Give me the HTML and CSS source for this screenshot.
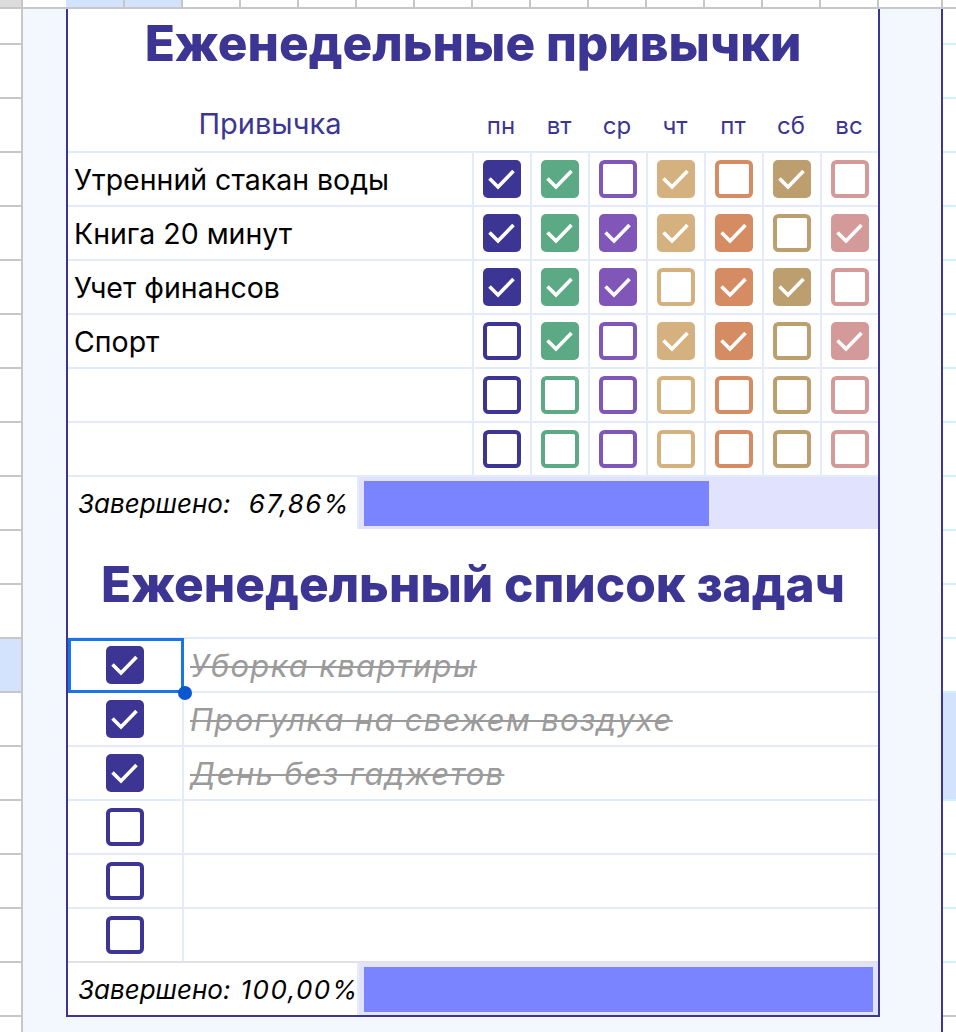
FILE: index.html
```html
<!DOCTYPE html>
<html lang="ru">
<head>
    <meta charset="UTF-8">
    <title>Еженедельные привычки</title>
    <link rel="stylesheet" href="styles.css">
</head>
<body>
    <svg class="sprite" xmlns="http://www.w3.org/2000/svg">
        <symbol id="on" viewBox="0 0 38 38">
            <rect width="38" height="38" rx="5" fill="currentColor"/>
            <path d="M6.5 18.5l8.5 8.5L30.5 11" fill="none" stroke="#fff" stroke-width="3.6"/>
        </symbol>
        <symbol id="off" viewBox="0 0 38 38">
            <rect x="2" y="2" width="34" height="34" rx="3.5" fill="#fff" stroke="currentColor" stroke-width="4"/>
        </symbol>
    </svg>

    <div class="col-heads">
        <div class="corner"></div>
        <div class="col-gutter"></div>
        <div class="col-head first selected"></div>
        <div class="col-head selected"></div>
        <div class="col-head"></div>
        <div class="col-head"></div>
        <div class="col-head"></div>
        <div class="col-head"></div>
        <div class="col-head"></div>
        <div class="col-head"></div>
        <div class="col-head"></div>
        <div class="col-head"></div>
        <div class="col-head"></div>
        <div class="col-head"></div>
        <div class="col-head"></div>
        <div class="col-head"></div>
        <div class="col-head wide"></div>
        <div class="col-head"></div>
    </div>

    <div class="sheet-body">
        <div class="row-heads">
            <div class="row-head top"></div>
            <div class="row-head"></div><div class="row-head"></div><div class="row-head"></div>
            <div class="row-head"></div><div class="row-head"></div><div class="row-head"></div>
            <div class="row-head"></div><div class="row-head"></div><div class="row-head"></div>
            <div class="row-head"></div><div class="row-head"></div>
            <div class="row-head selected"></div>
            <div class="row-head"></div><div class="row-head"></div><div class="row-head"></div>
            <div class="row-head"></div><div class="row-head"></div><div class="row-head"></div>
        </div>

        <div class="gutter"></div>

        <div class="card">
            <div class="title-block">
                <h1 class="title">Еженедельные привычки</h1>
            </div>

            <div class="habit-grid head">
                <div class="habit-label">Привычка</div>
                <div class="day">пн</div>
                <div class="day">вт</div>
                <div class="day">ср</div>
                <div class="day">чт</div>
                <div class="day">пт</div>
                <div class="day">сб</div>
                <div class="day">вс</div>
            </div>

            <div class="habit-grid row">
                <div class="habit-name">Утренний стакан воды</div>
                <div class="cell"><svg class="box d1"><use href="#on"/></svg></div>
                <div class="cell"><svg class="box d2"><use href="#on"/></svg></div>
                <div class="cell"><svg class="box d3"><use href="#off"/></svg></div>
                <div class="cell"><svg class="box d4"><use href="#on"/></svg></div>
                <div class="cell"><svg class="box d5"><use href="#off"/></svg></div>
                <div class="cell"><svg class="box d6"><use href="#on"/></svg></div>
                <div class="cell"><svg class="box d7"><use href="#off"/></svg></div>
            </div>
            <div class="habit-grid row">
                <div class="habit-name">Книга 20 минут</div>
                <div class="cell"><svg class="box d1"><use href="#on"/></svg></div>
                <div class="cell"><svg class="box d2"><use href="#on"/></svg></div>
                <div class="cell"><svg class="box d3"><use href="#on"/></svg></div>
                <div class="cell"><svg class="box d4"><use href="#on"/></svg></div>
                <div class="cell"><svg class="box d5"><use href="#on"/></svg></div>
                <div class="cell"><svg class="box d6"><use href="#off"/></svg></div>
                <div class="cell"><svg class="box d7"><use href="#on"/></svg></div>
            </div>
            <div class="habit-grid row">
                <div class="habit-name">Учет финансов</div>
                <div class="cell"><svg class="box d1"><use href="#on"/></svg></div>
                <div class="cell"><svg class="box d2"><use href="#on"/></svg></div>
                <div class="cell"><svg class="box d3"><use href="#on"/></svg></div>
                <div class="cell"><svg class="box d4"><use href="#off"/></svg></div>
                <div class="cell"><svg class="box d5"><use href="#on"/></svg></div>
                <div class="cell"><svg class="box d6"><use href="#on"/></svg></div>
                <div class="cell"><svg class="box d7"><use href="#off"/></svg></div>
            </div>
            <div class="habit-grid row">
                <div class="habit-name">Спорт</div>
                <div class="cell"><svg class="box d1"><use href="#off"/></svg></div>
                <div class="cell"><svg class="box d2"><use href="#on"/></svg></div>
                <div class="cell"><svg class="box d3"><use href="#off"/></svg></div>
                <div class="cell"><svg class="box d4"><use href="#on"/></svg></div>
                <div class="cell"><svg class="box d5"><use href="#on"/></svg></div>
                <div class="cell"><svg class="box d6"><use href="#off"/></svg></div>
                <div class="cell"><svg class="box d7"><use href="#on"/></svg></div>
            </div>
            <div class="habit-grid row">
                <div class="habit-name"></div>
                <div class="cell"><svg class="box d1"><use href="#off"/></svg></div>
                <div class="cell"><svg class="box d2"><use href="#off"/></svg></div>
                <div class="cell"><svg class="box d3"><use href="#off"/></svg></div>
                <div class="cell"><svg class="box d4"><use href="#off"/></svg></div>
                <div class="cell"><svg class="box d5"><use href="#off"/></svg></div>
                <div class="cell"><svg class="box d6"><use href="#off"/></svg></div>
                <div class="cell"><svg class="box d7"><use href="#off"/></svg></div>
            </div>
            <div class="habit-grid row">
                <div class="habit-name"></div>
                <div class="cell"><svg class="box d1"><use href="#off"/></svg></div>
                <div class="cell"><svg class="box d2"><use href="#off"/></svg></div>
                <div class="cell"><svg class="box d3"><use href="#off"/></svg></div>
                <div class="cell"><svg class="box d4"><use href="#off"/></svg></div>
                <div class="cell"><svg class="box d5"><use href="#off"/></svg></div>
                <div class="cell"><svg class="box d6"><use href="#off"/></svg></div>
                <div class="cell"><svg class="box d7"><use href="#off"/></svg></div>
            </div>

            <div class="done-row">
                <div class="done-label"><span>Завершено:</span><span class="pct">67,86%</span></div>
                <div class="done-track"><div class="done-bar" style="width: 67.86%"></div></div>
            </div>

            <div class="title-block second">
                <h1 class="title">Еженедельный список задач</h1>
            </div>

            <div class="task-row">
                <div class="task-check">
                    <svg class="box d1"><use href="#on"/></svg>
                    <div class="selection"><span class="handle"></span></div>
                </div>
                <div class="task-text done">Уборка квартиры</div>
            </div>
            <div class="task-row">
                <div class="task-check"><svg class="box d1"><use href="#on"/></svg></div>
                <div class="task-text done">Прогулка на свежем воздухе</div>
            </div>
            <div class="task-row">
                <div class="task-check"><svg class="box d1"><use href="#on"/></svg></div>
                <div class="task-text done">День без гаджетов</div>
            </div>
            <div class="task-row">
                <div class="task-check"><svg class="box d1"><use href="#off"/></svg></div>
                <div class="task-text"></div>
            </div>
            <div class="task-row">
                <div class="task-check"><svg class="box d1"><use href="#off"/></svg></div>
                <div class="task-text"></div>
            </div>
            <div class="task-row">
                <div class="task-check"><svg class="box d1"><use href="#off"/></svg></div>
                <div class="task-text"></div>
            </div>

            <div class="done-row last">
                <div class="done-label"><span>Завершено:</span><span class="pct">100,00%</span></div>
                <div class="done-track"><div class="done-bar" style="width: 100%"></div></div>
            </div>
        </div>

        <div class="gutter right"></div>

        <div class="next-card">
            <div class="next-cell top"></div>
            <div class="next-cell"></div><div class="next-cell"></div><div class="next-cell"></div>
            <div class="next-cell"></div><div class="next-cell"></div><div class="next-cell"></div>
            <div class="next-cell"></div><div class="next-cell"></div><div class="next-cell"></div>
            <div class="next-cell"></div><div class="next-cell"></div><div class="next-cell"></div>
            <div class="next-cell tall selected"></div>
            <div class="next-cell"></div><div class="next-cell"></div><div class="next-cell"></div>
            <div class="next-cell end"></div>
        </div>
    </div>
</body>
</html>
```

FILE: styles.css
```css
body {
    margin: 0;
    width: 956px;
    height: 1032px;
    overflow: hidden;
    background-color: #ffffff;
    font-family: Inter, "Noto Sans", sans-serif;
}
.sprite {
    position: absolute;
    width: 0;
    height: 0;
}

/* spreadsheet chrome */
.col-heads {
    display: flex;
    height: 7px;
    border-bottom: 2px solid #c7c7c7;
}
.corner {
    width: 21px;
    flex: none;
    background-color: #dcdcdc;
    border-right: 2px solid #c7c7c7;
}
.col-gutter {
    width: 43px;
    flex: none;
}
.col-head {
    width: 56px;
    flex: none;
    border-right: 2px solid #c7c7c7;
}
.col-head.first {
    width: 57px;
}
.col-head.wide {
    width: 62px;
}
.col-head.selected {
    background-color: #d3e3fd;
}
.sheet-body {
    display: flex;
    align-items: flex-start;
    height: 1023px;
    background-color: #f3f7fe;
}
.row-heads {
    width: 21px;
    flex: none;
    height: 100%;
    background-color: #ffffff;
    border-right: 2px solid #c7c7c7;
}
.row-head {
    height: 52px;
    border-bottom: 2px solid #c7c7c7;
}
.row-head.top {
    height: 34px;
}
.row-head.selected {
    background-color: #d3e3fd;
}
.gutter {
    width: 43px;
    flex: none;
}
.gutter.right {
    width: 61px;
}
.next-card {
    flex: 1;
    height: 100%;
    border-left: 2px solid #3c3594;
    background-color: #ffffff;
}
.next-cell {
    height: 52px;
    border-bottom: 2px solid #cff3fb;
}
.next-cell.top {
    height: 34px;
}
.next-cell.tall {
    height: 106px;
}
.next-cell.selected {
    background-color: #d3e3fd;
}
.next-cell.end {
    border-bottom-color: #c7c7c7;
}

/* card */
.card {
    width: 810px;
    flex: none;
    background-color: #ffffff;
    border: 2px solid #3c3594;
    border-top: none;
}
.title-block {
    height: 78px;
    padding-top: 10px;
    text-align: center;
}
.title-block.second {
    height: 77px;
    padding-top: 31px;
}
.title {
    margin: 0;
    font-size: 49.5px;
    font-weight: 800;
    line-height: 1;
    color: #3c3594;
}

.habit-grid {
    display: grid;
    grid-template-columns: 404px repeat(7, 58px);
}
.habit-grid.head {
    height: 41px;
    padding-bottom: 13px;
    align-items: end;
    color: #3c3594;
    line-height: 1;
}
.habit-label {
    text-align: center;
    font-size: 29px;
}
.day {
    text-align: center;
    font-size: 24px;
}
.habit-grid.row {
    height: 52px;
    border-top: 2px solid #e4ecfb;
}
.habit-name {
    display: flex;
    align-items: center;
    padding-left: 6px;
    font-size: 28.5px;
    color: #000000;
}
.cell {
    display: flex;
    align-items: center;
    justify-content: center;
    border-left: 2px solid #e4ecfb;
}
.box {
    width: 38px;
    height: 38px;
}
.d1 { color: #3c3594; }
.d2 { color: #5ca985; }
.d3 { color: #8156b9; }
.d4 { color: #d4b17e; }
.d5 { color: #d58c62; }
.d6 { color: #bd9f6f; }
.d7 { color: #d39a99; }

.done-row {
    display: flex;
    height: 52px;
    border-top: 2px solid #e4ecfb;
}
.done-row.last {
    border-top-color: #e0e0e6;
}
.done-label {
    width: 272px;
    flex: none;
    display: flex;
    align-items: center;
    justify-content: space-between;
    gap: 10px;
    padding: 0 7px 0 10px;
    font-size: 26px;
    font-style: italic;
    white-space: nowrap;
}
.pct {
    letter-spacing: 1.5px;
}
.done-track {
    flex: 1;
    padding: 4px 5px 3px 5px;
    background-color: #e1e2fe;
    border-left: 2px solid #e4ecfb;
}
.done-bar {
    height: 100%;
    background-color: #7b84ff;
}

.task-row {
    display: flex;
    height: 52px;
    border-top: 2px solid #e4ecfb;
}
.task-check {
    position: relative;
    width: 114px;
    flex: none;
    display: flex;
    align-items: center;
    justify-content: center;
}
.task-text {
    flex: 1;
    display: flex;
    align-items: center;
    padding-left: 6px;
    border-left: 2px solid #e4ecfb;
    font-size: 31px;
    letter-spacing: 1.3px;
    font-style: italic;
    color: #9b9b9b;
    white-space: nowrap;
}
.task-text.done {
    text-decoration: line-through;
    text-decoration-thickness: 2px;
}
.selection {
    position: absolute;
    top: -1px;
    left: 0;
    width: 110px;
    height: 49px;
    border: 3px solid #1a73e8;
}
.handle {
    position: absolute;
    right: -11px;
    bottom: -10px;
    width: 14px;
    height: 14px;
    border-radius: 50%;
    background-color: #0b57d0;
}
```
